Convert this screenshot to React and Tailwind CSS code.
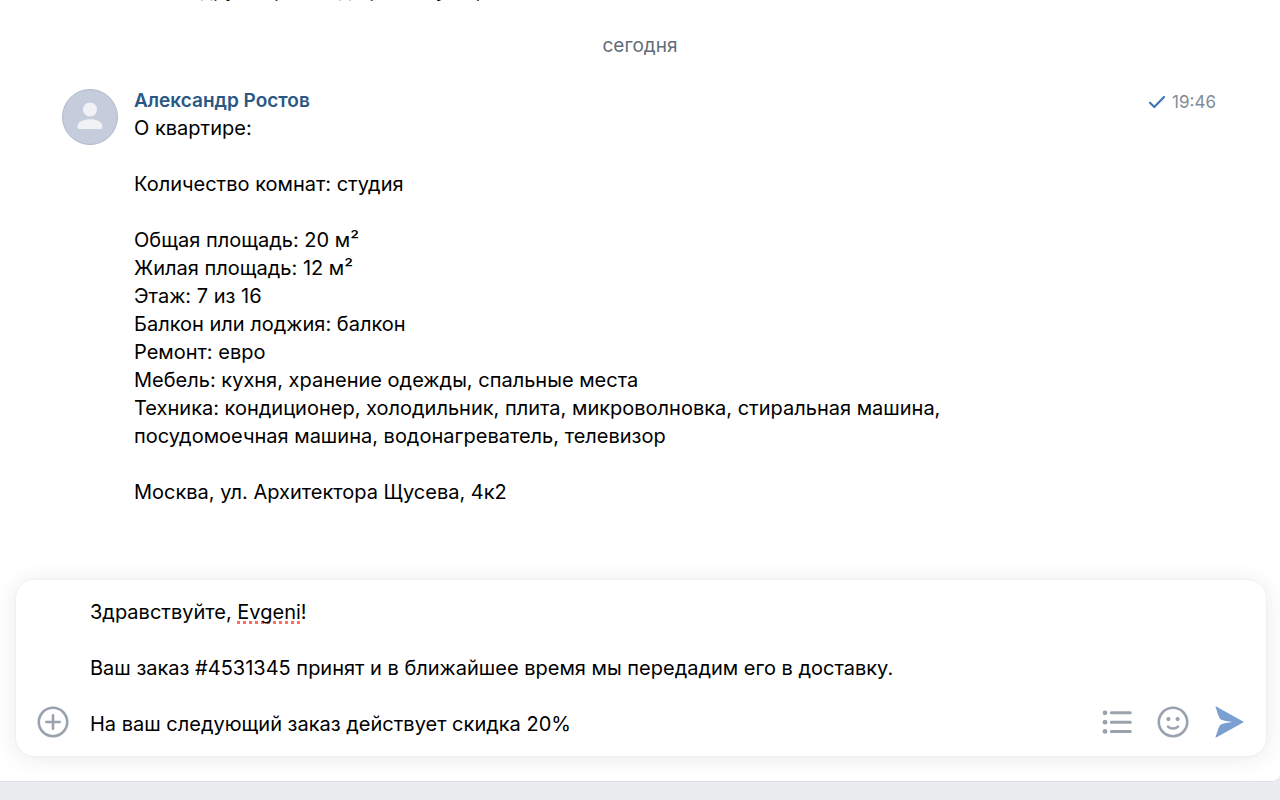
import React, { useState } from "react";

const messageLines = [
  "О квартире:",
  "",
  "Количество комнат: студия",
  "",
  "Общая площадь: 20 м²",
  "Жилая площадь: 12 м²",
  "Этаж: 7 из 16",
  "Балкон или лоджия: балкон",
  "Ремонт: евро",
  "Мебель: кухня, хранение одежды, спальные места",
  "Техника: кондиционер, холодильник, плита, микроволновка, стиральная машина, посудомоечная машина, водонагреватель, телевизор",
  "",
  "Москва, ул. Архитектора Щусева, 4к2",
];

const draft = `Здравствуйте, Evgeni!

Ваш заказ #4531345 принят и в ближайшее время мы передадим его в доставку.

На ваш следующий заказ действует скидка 20%`;

const Avatar = () => (
  <svg viewBox="0 0 56 56" className="size-14 shrink-0" aria-hidden="true">
    <circle cx="28" cy="28" r="27.5" fill="#c5cddc" stroke="#b0b9ca" />
    <circle cx="28" cy="20.5" r="7" fill="#f0f2f5" />
    <path
      d="M15.5 37.2c0-4.6 6.5-7 12.5-7s12.5 2.4 12.5 7c0 2-.9 2.9-2.600 2.900H18.100c-1.700 0-2.600-.9-2.600-2.900Z"
      fill="#f0f2f5"
    />
  </svg>
);

const CheckIcon = () => (
  <svg
    viewBox="0 0 18 14"
    className="h-3.5 w-[18px]"
    fill="none"
    stroke="#3f77b8"
    strokeWidth="2.2"
    strokeLinecap="round"
    strokeLinejoin="round"
    aria-hidden="true"
  >
    <path d="M2 7.8 6.3 12 16 2" />
  </svg>
);

const PlusIcon = () => (
  <svg
    viewBox="0 0 32 32"
    className="size-8"
    fill="none"
    stroke="currentColor"
    strokeWidth="2.6"
    strokeLinecap="round"
    aria-hidden="true"
  >
    <circle cx="16" cy="16" r="14.2" />
    <path d="M16 9.3v13.4M9.3 16h13.4" />
  </svg>
);

const ListIcon = () => (
  <svg viewBox="0 0 32 32" className="size-8" aria-hidden="true">
    <g fill="currentColor">
      <circle cx="4" cy="6.8" r="2.4" />
      <circle cx="4" cy="16.2" r="2.4" />
      <circle cx="4" cy="25.4" r="2.4" />
    </g>
    <path
      d="M10.3 6.8h19M10.3 16.2h19M10.3 25.4h19"
      stroke="currentColor"
      strokeWidth="3"
      strokeLinecap="round"
    />
  </svg>
);

const SmileIcon = () => (
  <svg viewBox="0 0 32 32" className="size-8" fill="none" aria-hidden="true">
    <circle cx="16" cy="16" r="14.2" stroke="currentColor" strokeWidth="2.6" />
    <circle cx="11.4" cy="13.1" r="2.1" fill="currentColor" />
    <circle cx="20.6" cy="13.1" r="2.1" fill="currentColor" />
    <path
      d="M11 20.6c2.8 2.5 7.2 2.5 10 0"
      stroke="currentColor"
      strokeWidth="2.6"
      strokeLinecap="round"
    />
  </svg>
);

const SendIcon = () => (
  <svg viewBox="0 0 32 32" className="size-8" fill="#7b9fd0" aria-hidden="true">
    <path d="M2.5 1c-.2-.5.2-.8.7-.5l26.900 14.900c.6.300.6.900 0 1.200L3.200 31.500c-.6.300-.9 0-.7-.6l3-8.700c.9-2.800 2-3.900 4.400-4.500 2.400-.7 5.500-1.200 9.300-1.700-3.800-.5-6.900-1-9.300-1.700-2.400-.6-3.500-1.700-4.400-4.500Z" />
  </svg>
);

const App = () => {
  const [text, setText] = useState(draft);

  return (
    <div className="flex h-screen flex-col overflow-hidden bg-[#ebecef] font-['Inter','Liberation_Sans',sans-serif] text-[19px] leading-7 text-black">
      <main className="flex min-h-0 flex-1 flex-col overflow-hidden rounded-br-lg border-b border-[#dfe1e5] bg-white">
        <section className="min-h-0 flex-1 overflow-hidden">
          <p className="-mt-6 pl-[134px] text-xl leading-7">
            Также другой район до рынка у парка
          </p>
          <p className="mt-7 text-center text-[#626d7a]">сегодня</p>
          <article className="mt-[27px] flex gap-4 pr-16 pl-[62px]">
            <div className="pt-0.5">
              <Avatar />
            </div>
            <div className="min-w-0 flex-1">
              <header className="flex h-[27px] items-center justify-between">
                <a href="#profile" className="font-semibold text-[#2a5885]">
                  Александр Ростов
                </a>
                <span className="flex items-center gap-1.5 pt-0.5 text-[17px] leading-6 text-[#818c99]">
                  <CheckIcon />
                  <time>19:46</time>
                </span>
              </header>
              <div className="max-w-[820px] text-xl leading-7">
                {messageLines.map((line, i) => (
                  <p key={i} className="min-h-7">
                    {line}
                  </p>
                ))}
              </div>
            </div>
          </article>
        </section>

        <form
          className="mr-3.5 mb-[25px] ml-4 flex items-end rounded-[18px] bg-white px-[21px] py-[18px] shadow-[0_2px_24px_rgba(0,20,10,0.09),0_0_2px_rgba(0,0,0,0.08)]"
          onSubmit={(e) => e.preventDefault()}
        >
          <button
            type="button"
            aria-label="Прикрепить"
            className="text-[#99a2ad]"
          >
            <PlusIcon />
          </button>
          <div className="relative ml-[21px] flex flex-1 text-xl leading-7">
            {/* подчёркивание слова с ошибкой */}
            {text.startsWith("Здравствуйте, Evgeni") && (
              <div
                aria-hidden="true"
                className="pointer-events-none absolute top-0 left-0 text-transparent"
              >
                Здравствуйте,{" "}
                <span className="underline decoration-[#ff6b66] decoration-dotted decoration-3 underline-offset-2 [text-decoration-skip-ink:none]">
                  Evgeni
                </span>
              </div>
            )}
            <textarea
              aria-label="Сообщение"
              rows={5}
              spellCheck={false}
              value={text}
              onChange={(e) => setText(e.target.value)}
              className="relative block w-full resize-none overflow-hidden bg-transparent outline-none"
            />
          </div>
          <div className="flex gap-6 text-[#99a2ad]">
            <button type="button" aria-label="Шаблоны">
              <ListIcon />
            </button>
            <button type="button" aria-label="Смайлы">
              <SmileIcon />
            </button>
            <button type="submit" aria-label="Отправить">
              <SendIcon />
            </button>
          </div>
        </form>
      </main>
      <footer className="h-[18px] shrink-0" />
    </div>
  );
};

export default App;
